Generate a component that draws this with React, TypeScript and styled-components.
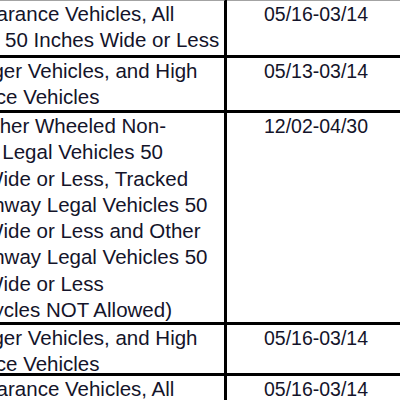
import * as React from "react";
import styled, { createGlobalStyle } from "styled-components";

const GlobalStyle = createGlobalStyle`
    html, body {
        margin: 0;
        padding: 0;
        background: #ffffff;
    }
`

// one wrapped line of the area text; shift nudges a line to match the scan
interface AreaLine {
    text: string
    shift?: number
}

interface RowData {
    area: AreaLine[]
    season: string
    height: number
}

const clearance: AreaLine[] = [
    { text: "High Clearance Vehicles, All" },
    { text: "Vehicles 50 Inches Wide or Less", shift: 5 }
]
const passenger: AreaLine[] = [
    { text: "Passenger Vehicles, and High", shift: 6 },
    { text: "Clearance Vehicles", shift: 6 }
]

const rows: RowData[] = [
    { area: clearance, season: "05/16-03/14", height: 54 },
    { area: passenger, season: "05/13-03/14", height: 52 },
    {
        area: [
            { text: "ATVs, Other Wheeled Non-" },
            { text: "Highway Legal Vehicles 50" },
            { text: "Inches Wide or Less, Tracked" },
            { text: "Non-Highway Legal Vehicles 50" },
            { text: "Inches Wide or Less and Other" },
            { text: "Non-Highway Legal Vehicles 50" },
            { text: "Inches Wide or Less" },
            { text: "(Motorcycles NOT Allowed)", shift: 6 }
        ],
        season: "12/02-04/30",
        height: 209
    },
    { area: passenger, season: "05/16-03/14", height: 48 },
    { area: clearance, season: "05/16-03/14", height: 52 }
]

const Viewport = styled.div`
    width: 400px;
    height: 400px;
    overflow: hidden;
    background: #ffffff;
`
const Table = styled.table`
    width: 497px;
    border-collapse: separate;
    border-spacing: 0;
    margin-top: -2px;
    margin-left: -89px;
    font-family: "Liberation Sans", Arial, sans-serif;
    line-height: 26.3px;
    color: #14142a;
`
const Row = styled.tr<{ $first?: boolean }>`
    & > td {
        border-top: ${p => (p.$first ? "3px solid #a3a3a3" : "none")};
    }
`
const Cell = styled.td<{ $h: number }>`
    height: ${p => p.$h}px;
    padding: 0;
    vertical-align: top;
    border-bottom: 3px solid #000000;
    border-right: 3px solid #000000;
    box-sizing: content-box;
    overflow: hidden;
`
const AreaCell = styled(Cell)`
    width: 302px;
    padding-left: 4px;
    padding-right: 4px;
    border-left: 3px solid #000000;
    font-size: 20.5px;
`
const SeasonCell = styled(Cell)`
    width: 178px;
    text-align: center;
    font-size: 19.5px;
`
const Clip = styled.div<{ $h: number }>`
    height: ${p => p.$h}px;
    overflow: hidden;
`
const Line = styled.div<{ $shift?: number }>`
    white-space: nowrap;
    padding-left: ${p => p.$shift ?? 0}px;
`

export default function App() {
    return (
        <>
            <GlobalStyle />
            <Viewport>
                <Table>
                    <tbody>
                        {rows.map((r, i) => (
                            <Row key={i} $first={i === 0}>
                                <AreaCell $h={r.height}>
                                    <Clip $h={r.height}>
                                        {r.area.map((l, j) => (
                                            <Line key={j} $shift={l.shift}>{l.text}</Line>
                                        ))}
                                    </Clip>
                                </AreaCell>
                                <SeasonCell $h={r.height}>
                                    <Clip $h={r.height}>
                                        <Line>{r.season}</Line>
                                    </Clip>
                                </SeasonCell>
                            </Row>
                        ))}
                    </tbody>
                </Table>
            </Viewport>
        </>
    )
}
